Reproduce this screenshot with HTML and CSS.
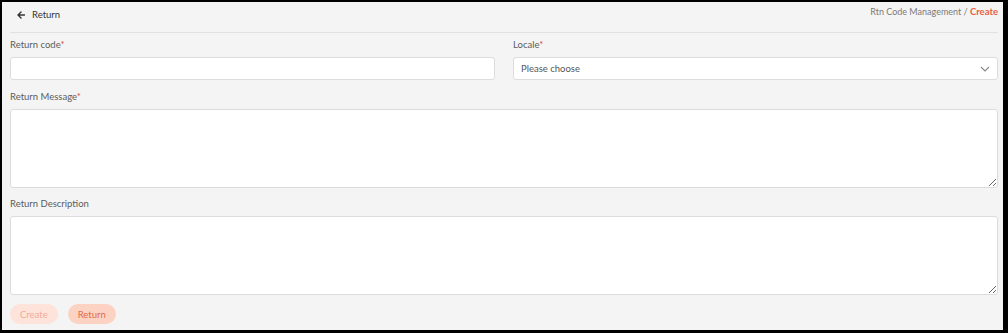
FILE: index.html
```html
<!DOCTYPE html>
<html lang="en">

<head>
    <meta charset="UTF-8">
    <title>Rtn Code Management - Create</title>
    <link rel="stylesheet" href="styles.css">
</head>

<body>
    <div class="frame">
        <div class="page-header">
            <a href="#" class="back-link">
                <svg width="8" height="8" viewBox="0 0 8 8" aria-hidden="true">
                    <path d="M7.5 4H1.2M4 1L1 4L4 7" fill="none" stroke="#333" stroke-width="1.4" stroke-linecap="round" stroke-linejoin="round"/>
                </svg>
                Return
            </a>
            <div class="breadcrumb">Rtn Code Management / <b>Create</b></div>
        </div>

        <form class="code-form">
            <div class="form-row">
                <div class="field">
                    <label>Return code<span class="req">*</span></label>
                    <input type="text" class="input">
                </div>
                <div class="field">
                    <label>Locale<span class="req">*</span></label>
                    <div class="select-wrap">
                        <select class="input select">
                            <option>Please choose</option>
                        </select>
                        <svg class="chevron" width="10" height="6" viewBox="0 0 10 6" aria-hidden="true">
                            <path d="M1 1L5 5L9 1" fill="none" stroke="#888" stroke-width="1.1"/>
                        </svg>
                    </div>
                </div>
            </div>

            <div class="field field-area">
                <label>Return Message<span class="req">*</span></label>
                <textarea class="input area"></textarea>
            </div>

            <div class="field field-area">
                <label>Return Description</label>
                <textarea class="input area"></textarea>
            </div>

            <div class="actions">
                <button type="button" class="btn btn-create">Create</button>
                <button type="button" class="btn btn-return">Return</button>
            </div>
        </form>
    </div>
</body>

</html>
```

FILE: styles.css
```css
html,
body {
    margin: 0;
    padding: 0;
}

body {
    font-family: Lato, "Open Sans", sans-serif;
    font-size: 9.5px;
    color: #5c5c5c;
}

.frame {
    height: 333px;
    box-sizing: border-box;
    border-style: solid;
    border-color: #000;
    border-width: 2px 5px 3px 2px;
    background: #f4f4f4;
    padding: 0 5px 0 8px;
}

.page-header {
    height: 31px;
    box-sizing: border-box;
    display: flex;
    justify-content: space-between;
    align-items: flex-start;
    padding-top: 6px;
    border-bottom: 1px solid #e1e1e1;
}

.back-link {
    display: flex;
    align-items: center;
    gap: 7px;
    padding-left: 7px;
    line-height: 14px;
    color: #333;
    text-decoration: none;
}

.breadcrumb {
    margin-top: -3px;
    line-height: 14px;
    font-size: 9px;
    color: #7a7a7a;
}

.breadcrumb b {
    font-size: 9.5px;
    color: #e8623e;
    font-weight: 700;
}

.code-form {
    padding-top: 5px;
}

.form-row {
    display: grid;
    grid-template-columns: 1fr 1fr;
    gap: 18px;
}

.field {
    display: flex;
    flex-direction: column;
    margin-bottom: 10px;
}

.field-area {
    margin-bottom: 9px;
}

.field label {
    line-height: 14px;
    margin-bottom: 5px;
    color: #5c5c5c;
}

.req {
    color: #e04a3a;
}

.input {
    box-sizing: border-box;
    width: 100%;
    height: 23px;
    margin: 0;
    border: 1px solid #dcdcdc;
    border-radius: 3px;
    background: #fff;
    font-family: inherit;
    font-size: 9.5px;
    color: #555;
    padding: 0 7px;
    outline: none;
}

.select-wrap {
    position: relative;
}

.select {
    appearance: none;
    -webkit-appearance: none;
}

.chevron {
    position: absolute;
    right: 8px;
    top: 9px;
}

.area {
    height: 79px;
    padding: 5px 7px;
    resize: vertical;
}

.actions {
    display: flex;
    gap: 10px;
}

.btn {
    height: 20px;
    padding: 0 10px;
    border: none;
    border-radius: 10px;
    font-family: inherit;
    font-size: 9.5px;
}

.btn-create {
    background: #fde3da;
    color: #f2ab94;
}

.btn-return {
    background: #fcd3c2;
    color: #df6c4b;
}
```
